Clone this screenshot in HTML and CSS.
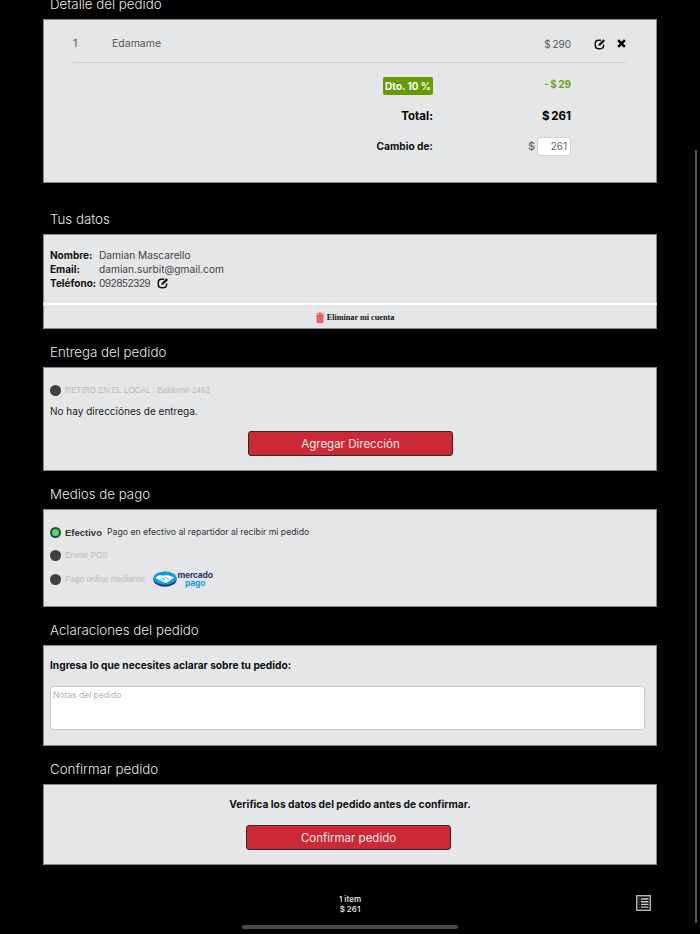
FILE: index.html
```html
<!DOCTYPE html>
<html lang="es">
<head>
    <meta charset="UTF-8">
    <meta name="viewport" content="width=device-width, initial-scale=1.0">
    <title>Confirmar pedido</title>
    <link rel="stylesheet" href="styles.css">
</head>
<body>
    <main class="checkout">
        <section>
            <h2>Detalle del pedido</h2>
            <div class="card order-card">
                <div class="item-row">
                    <span>1</span>
                    <span>Edamame</span>
                    <span class="price">$ 290</span>
                    <span class="item-actions">
                        <svg class="icon" viewBox="0 0 12 12"><path d="M9.6 6.6v1.2a3.2 3.2 0 0 1-3.2 2.9H4.2A3 3 0 0 1 1.3 7.800V5.200a3 3 0 0 1 2.900-3h2.900" fill="none" stroke="#111" stroke-width="1.500"/><path d="M4.300 8l.4-2 4.700-4.700 1.600 1.600L6.300 7.600z" fill="#111"/></svg>
                        <svg class="icon-close" viewBox="0 0 10 10"><path d="M1.300 1.300l7.400 7.400M8.700 1.300l-7.400 7.400" stroke="#000" stroke-width="2.800"/></svg>
                    </span>
                </div>
                <div class="totals">
                    <div class="total-row discount-row">
                        <span class="badge">Dto. 10 %</span>
                        <span class="discount">- $ 29</span>
                    </div>
                    <div class="total-row grand-row">
                        <span>Total:</span>
                        <span class="grand-value">$ 261</span>
                    </div>
                    <div class="total-row change-row">
                        <span>Cambio de:</span>
                        <span class="change-field"><span class="currency">$</span><input type="text" value="261"></span>
                    </div>
                </div>
            </div>
        </section>

        <section>
            <h2>Tus datos</h2>
            <div class="card user-card">
                <dl class="user-data">
                    <dt>Nombre:</dt><dd>Damian Mascarello</dd>
                    <dt>Email:</dt><dd>damian.surbit@gmail.com</dd>
                    <dt>Teléfono:</dt>
                    <dd class="phone"><span class="phone-number">092852329</span>
                        <svg class="icon" viewBox="0 0 12 12"><path d="M9.600 6.600v1.200a3.200 3.200 0 0 1-3.200 2.900H4.200A3 3 0 0 1 1.300 7.800V5.200a3 3 0 0 1 2.900-3h2.900" fill="none" stroke="#111" stroke-width="1.500"/><path d="M4.300 8l.4-2 4.700-4.700 1.600 1.600L6.300 7.600z" fill="#111"/></svg>
                    </dd>
                </dl>
                <div class="delete-account">
                    <svg class="trash" viewBox="0 0 8 11"><path d="M0 1.400h8v1H0zM2.800 1.400V.4h2.400v1z" fill="#ef4a52"/><path d="M.7 3h6.600v7.200a.7.7 0 0 1-.7.700H1.400a.7.7 0 0 1-.7-.7z" fill="#ef4a52"/><path d="M2.300 4v5.800M4 4v5.800M5.700 4v5.800" stroke="#f59aa0" stroke-width=".5"/></svg>
                    <span>Eliminar mi cuenta</span>
                </div>
            </div>
        </section>

        <section>
            <h2>Entrega del pedido</h2>
            <div class="card delivery-card">
                <div class="option">
                    <span class="radio"></span>
                    <span class="option-label">RETIRO EN EL LOCAL : Baldomir 2463</span>
                </div>
                <p class="no-address">No hay direcciónes de entrega.</p>
                <button class="btn-red add-address">Agregar Dirección</button>
            </div>
        </section>

        <section>
            <h2>Medios de pago</h2>
            <div class="card payment-card">
                <div class="option">
                    <span class="radio checked"></span>
                    <strong class="option-title">Efectivo</strong>
                    <span class="option-desc">Pago en efectivo al repartidor al recibir mi pedido</span>
                </div>
                <div class="option">
                    <span class="radio"></span>
                    <span class="option-label">Enviar POS</span>
                </div>
                <div class="option">
                    <span class="radio"></span>
                    <span class="option-label">Pago online mediante:</span>
                    <span class="mp-logo">
                        <svg class="mp-mark" viewBox="0 0 24 16">
                            <ellipse cx="12" cy="8.300" rx="11.700" ry="7.500" fill="#2d3277"/>
                            <ellipse cx="12" cy="7.200" rx="11.500" ry="6.600" fill="#0a9fe3"/>
                            <path d="M2.500 6.500l4-2.500 4 .8 2-.8 3 .3 5.500 2.200-3 2.500-5 3-2.500-.8-5-2.500z" fill="#fff"/>
                            <path d="M7 8l3 2.500M9 7.500l3.500 2.500M11 5.500l-2 2 2 .5 2-1.500 3.500 2.500" fill="none" stroke="#0a9fe3" stroke-width=".6"/>
                        </svg>
                        <span class="mp-text"><span class="mp-top">mercado</span><span class="mp-bottom">pago</span></span>
                    </span>
                </div>
            </div>
        </section>

        <section>
            <h2>Aclaraciones del pedido</h2>
            <div class="card notes-card">
                <label class="notes-label" for="notes">Ingresa lo que necesites aclarar sobre tu pedido:</label>
                <textarea id="notes" placeholder="Notas del pedido"></textarea>
            </div>
        </section>

        <section>
            <h2>Confirmar pedido</h2>
            <div class="card confirm-card">
                <p>Verifica los datos del pedido antes de confirmar.</p>
                <button class="btn-red confirm-btn">Confirmar pedido</button>
            </div>
        </section>
    </main>

    <footer class="cart-bar">
        <div class="cart-summary">
            <div>1 item</div>
            <div>$ 261</div>
        </div>
        <svg class="list-icon" viewBox="0 0 15 16">
            <rect x=".7" y=".7" width="13.600" height="14.600" fill="#111" stroke="#b5b5b5" stroke-width="1.400"/>
            <path d="M5 4h7.500M5 6.700h7.500M5 9.400h7.500M5 12.100h7.500" stroke="#c8c8c8" stroke-width="1.400"/>
            <path d="M2.500 4h1M2.500 6.700h1M2.500 9.400h1M2.500 12.100h1" stroke="#666" stroke-width="1.400"/>
        </svg>
    </footer>

    <div class="scrollbar"></div>
    <div class="home-indicator"></div>
</body>
</html>
```

FILE: styles.css
```css
html, body {
    margin: 0;
    padding: 0;
    height: 934px;
    overflow: hidden;
    background-color: #000;
}

body {
    position: relative;
    font-family: Inter, "Noto Sans", sans-serif;
    color: #111;
}

.checkout {
    margin-top: -19px; /* page is scrolled */
    padding: 0 43px;
}

section:nth-child(2) {
    margin-top: 13px;
}

h2 {
    margin: 0;
    padding: 11px 7px 3px;
    font-size: 13.3px;
    font-weight: 300;
    line-height: 24px;
    color: #e8e8e8;
}

.card {
    box-sizing: border-box;
    background-color: #e5e6e8;
    box-shadow: inset 0 0 0 1px #8a8a8a;
}

.icon {
    width: 12px;
    height: 12px;
}

.icon-close {
    width: 9px;
    height: 9px;
    margin-top: -1px;
}

/* Detalle */
.order-card {
    height: 164px;
    padding: 0 31px 0 30px;
}

.item-row {
    display: grid;
    grid-template-columns: 39px 1fr 60px 55px;
    align-items: center;
    height: 37px;
    padding-top: 6px;
    border-bottom: 1.5px solid #cdcfd1;
    font-size: 10.5px;
    color: #555;
}

.price {
    text-align: right;
    word-spacing: -1px;
    font-size: 10px;
}

.item-actions {
    display: flex;
    justify-content: flex-end;
    gap: 11px;
    align-items: center;
}

.total-row {
    display: grid;
    grid-template-columns: 360px 138px;
    align-items: center;
    justify-items: end;
    font-weight: 700;
}

.discount-row {
    padding-top: 13px;
    height: 19px;
}

.badge {
    padding: 3px 2px;
    background-color: #669c00;
    border-radius: 2px;
    color: #fff;
    font-size: 10px;
    line-height: 12px;
}

.discount {
    margin-bottom: 3px;
    color: #6ba313;
    font-size: 10px;
    word-spacing: -1px;
}

.grand-row {
    height: 20px;
    margin-top: 11px;
    font-size: 11.5px;
    color: #000;
}

.grand-value {
    word-spacing: -1px;
}

.change-row {
    height: 20px;
    margin-top: 10px;
    font-size: 10.2px;
}

.change-field {
    display: flex;
    align-items: center;
    gap: 2px;
}

.currency {
    color: #555;
    font-weight: 400;
    font-size: 11px;
}

.change-field input {
    box-sizing: border-box;
    width: 34px;
    height: 19px;
    padding: 0 3px;
    border: 1.5px solid #cfd0d2;
    border-radius: 3px;
    background-color: #fff;
    text-align: right;
    font-family: inherit;
    font-size: 10px;
    color: #666;
}

/* Tus datos */
.user-card {
    height: 95px;
    display: flex;
    flex-direction: column;
}

.user-data {
    display: grid;
    grid-template-columns: 49px 1fr;
    grid-auto-rows: 14px;
    align-items: center;
    margin: 0;
    padding: 14px 7px 13px;
    height: 42px;
    font-size: 10.2px;
    border-bottom: 2px solid #fff;
}

.user-data dt {
    font-weight: 700;
    font-size: 10px;
}

.user-data dd {
    margin: 0;
    color: #444;
}

.phone {
    display: flex;
    align-items: center;
    gap: 7px;
}

.phone-number {
    letter-spacing: -0.6px;
}

.delete-account {
    display: flex;
    flex: 1;
    align-items: center;
    justify-content: center;
    gap: 3px;
    padding-left: 10px;
    font-family: "Liberation Serif", serif;
    font-size: 8.2px;
    font-weight: 700;
    color: #111;
}

.trash {
    width: 8px;
    height: 11px;
}

/* Opciones */
.option {
    display: flex;
    align-items: center;
    height: 14px;
    padding-left: 7px;
}

.radio {
    box-sizing: border-box;
    width: 11px;
    height: 11px;
    margin-right: 4px;
    border-radius: 50%;
    background-color: #3d3f41;
}

.radio.checked {
    border: 2.5px solid #3d3f41;
    background-color: #43e063;
}

.option-label {
    font-family: "Liberation Sans", sans-serif;
    font-size: 8.2px;
    color: #b9babc;
}

.option-title {
    font-family: "Liberation Sans", sans-serif;
    font-size: 9.5px;
    color: #333;
}

.option-desc {
    margin-left: 5px;
    font-size: 8.7px;
    color: #333;
}

.btn-red {
    display: block;
    box-sizing: border-box;
    height: 25px;
    background-color: #cc2936;
    border: 1px solid #3b2226;
    border-radius: 3px;
    color: #f5e9ea;
    font-family: inherit;
    font-size: 11.5px;
}

/* Entrega */
.delivery-card {
    height: 104px;
    padding-top: 16px;
}

.no-address {
    margin: 7px 0 0;
    padding-left: 7px;
    font-size: 10px;
    line-height: 14px;
    color: #222;
}

.add-address {
    width: 205px;
    margin: 13px 0 0 205px;
}

/* Pago */
.payment-card {
    height: 98px;
    padding-top: 16px;
}

.payment-card .option + .option {
    margin-top: 9px;
}

.payment-card .option:last-child {
    margin-top: 10px;
}

.mp-logo {
    display: flex;
    align-items: center;
    margin-left: 7px;
}

.mp-mark {
    width: 24px;
    height: 16px;
}

.mp-text {
    display: flex;
    flex-direction: column;
    align-items: center;
    font-size: 8.5px;
    line-height: 8px;
    font-weight: 700;
    letter-spacing: -0.2px;
}

.mp-top {
    color: #2d3277;
}

.mp-bottom {
    color: #0a9fe3;
}

/* Aclaraciones */
.notes-card {
    height: 101px;
    padding: 14px 12px 0 7px;
}

.notes-label {
    display: block;
    font-size: 10.2px;
    font-weight: 700;
    line-height: 13px;
}

.notes-card textarea {
    display: block;
    box-sizing: border-box;
    width: 100%;
    height: 44px;
    margin-top: 14px;
    padding: 3px 2px;
    border: 1.5px solid #c9cacc;
    border-radius: 4px;
    background-color: #fff;
    font-family: inherit;
    font-size: 8.5px;
    resize: none;
}

.notes-card textarea::placeholder {
    color: #b5b5b5;
}

/* Confirmar */
.confirm-card {
    height: 81px;
    padding-top: 14px;
    text-align: center;
}

.confirm-card p {
    margin: 0;
    font-size: 10.25px;
    font-weight: 700;
    line-height: 13px;
}

.confirm-btn {
    width: 205px;
    margin: 14px 0 0 203px;
}

/* Barra inferior */
.cart-bar {
    display: grid;
    grid-template-columns: 1fr auto 1fr;
    align-items: center;
    height: 69px;
    padding: 0 49px;
    color: #ddd;
}

.cart-summary {
    grid-column: 2;
    margin-top: 8px;
    text-align: center;
    font-size: 8px;
    font-weight: 600;
    line-height: 10px;
}

.list-icon {
    grid-column: 3;
    justify-self: end;
    width: 15px;
    height: 16px;
    margin-top: 6px;
}

.scrollbar {
    position: absolute;
    top: 150px;
    right: 3px;
    bottom: 11px;
    width: 2px;
    background-color: #555;
}

.home-indicator {
    position: absolute;
    left: 242px;
    bottom: 5px;
    width: 216px;
    height: 4px;
    border-radius: 2px;
    background-color: #4a4a4a;
}
```
